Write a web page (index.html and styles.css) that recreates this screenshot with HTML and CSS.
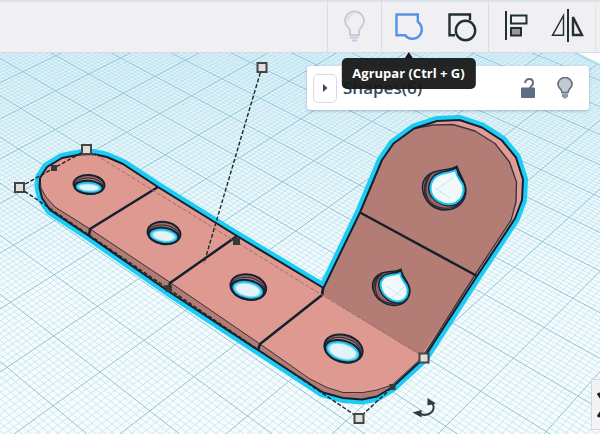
FILE: index.html
```html
<!DOCTYPE html>
<html lang="es">
<head>
<meta charset="utf-8">
<meta name="viewport" content="width=device-width, initial-scale=1">
<title>Editor 3D</title>
<link rel="stylesheet" href="styles.css">
</head>
<body>
<header class="toolbar">
  <div class="group">
    <button class="tool" type="button" aria-label="Mostrar todo" disabled>
      <svg viewBox="0 0 54 52" fill="none" stroke="#c3ccd8" stroke-width="2">
        <path d="M22 35v-4c0-3-5-5-5-10a9.500 9.500 0 0 1 19 0c0 5-5 7-5 10v4z"/>
        <path d="M20 21c0-4 2-6 5-7" stroke-width="1"/>
        <path d="M22 37.500h9M24 40.500h5"/>
      </svg>
    </button>
  </div>
  <div class="group">
    <div class="tool-wrap">
      <button class="tool" type="button" aria-describedby="tip" aria-label="Agrupar">
        <svg viewBox="0 0 54 52" fill="none" stroke="#5594e0" stroke-width="2.400">
          <path d="M14.500 14.500h21.300v7.300a9.300 9.300 0 1 1-12.600 13.400h-8.700z"/>
        </svg>
      </button>
      <div class="tooltip" id="tip" role="tooltip">Agrupar (Ctrl + G)</div>
    </div>
    <button class="tool" type="button" aria-label="Desagrupar">
      <svg viewBox="0 0 54 52" fill="none" stroke="#22302f" stroke-width="2.400">
        <path d="M35 20v-5.500H14.500v20.700H20"/>
        <circle cx="30.500" cy="30.500" r="9.700"/>
      </svg>
    </button>
  </div>
  <div class="group">
    <button class="tool" type="button" aria-label="Alinear">
      <svg viewBox="0 0 54 52" fill="none" stroke="#22302f" stroke-width="2">
        <path d="M17 11v29"/>
        <path d="M22 15.500h15.500v8H22z"/>
        <path d="M22 28h10v7.500H22z" fill="#96999c"/>
      </svg>
    </button>
    <button class="tool" type="button" aria-label="Reflejar">
      <svg viewBox="0 0 54 52" fill="none" stroke="#22302f">
        <path d="M21.500 15.500v19.800H10.500z" stroke-width="1.400"/>
        <path d="M26 9v33" stroke-width="2"/>
        <path d="M31 17v18h9z" stroke-width="2.400"/>
      </svg>
    </button>
  </div>
</header>

<main class="stage">
  <svg class="scene" viewBox="0 53 600 381" preserveAspectRatio="xMinYMin slice" role="img" aria-label="Pieza en L con agujeros">
    <defs>
      <linearGradient id="haze" x1="0" y1="0" x2="0" y2="1">
        <stop offset="0" stop-color="#cfe9f2" stop-opacity="0.6"/>
        <stop offset="0.600" stop-color="#cfe9f2" stop-opacity="0"/>
      </linearGradient>
    </defs>
    <rect y="53" width="600" height="381" fill="url(#haze)"/>
    <path id="plane-fine" class="fine"/>
    <path id="plane-bold" class="bold"/>
    <path d="M569 50L600 65V50z" fill="#fafcfd"/>
    <path d="M569 50L600 65" stroke="#a9dcea" stroke-width="2"/>

    <g stroke-linejoin="round">
      <path fill="#15202f" stroke="#1cccf4" stroke-width="10" d="M40 178L47 167L62 158L80 154.500L93 154L107 157L123 164L158 187L237 236L323.500 288L360 212.500L382 160L393.500 143.500L414 128.500L437 121L459.500 120L482 127.500L502 140.500L516 157.500L523 179.500L522 200L515 218.500L477 276L424 358L392.500 387L377 396.500L362 399.500L343 398L323 392.500L310 384L258 350L168 291L89 236L50 210L42 198L39.500 187z"/>
      <path class="side" d="M40 178L47 198L55 207L90 229L168 281L260 344L310 379L327 387L343 392.500L363 392.500L377 390L392 385L392.500 387L377 396.500L362 399.500L343 398L323 392.500L310 384L258 350L168 291L89 236L50 210L42 198L39.500 187z"/>
      <path class="top" d="M40 178L47 167L62 158L80 154.500L93 154L107 157L123 164L158 187L237 236L323.500 288L424 356L392 385L377 390L363 392.500L343 392.500L327 387.500L310 379L260 344L168 281L90 229L55 207L46 197L41 188z"/>
      <path class="outline" d="M40 178L47 167L62 158L80 154.500L93 154L107 157L123 164L158 187L237 236L323.500 288M424 358L392.500 387L377 396.500L362 399.500L343 398L323 392.500L310 384L258 350L168 291L89 236L50 210L42 198L39.500 187L40 178"/>
      <path class="rim" d="M323.500 288L360 212.500L382 160L393.500 143.500L414 128.500L437 121L459.500 120L482 127.500L502 140.500L516 157.500L523 179.500L522 200L515 218.500L477 276L424 358L322 294z"/>
      <path class="flap" d="M323.500 288L360 212.500L382 160L393.500 143.500L414 128.500L433 125L453 124.500L475 131L495 143.500L509.500 162L516.500 182L516 202L509 221L475 275L421 356L322 295z"/>
      <path d="M414 128.500L433 125L453 124.500L475 131L495 143.500L509.500 162L516.500 182L516 202L511 220L475 275L424 355" fill="none" stroke="#3a343e" stroke-width="1.400"/>
      <path class="outline" d="M322 295L323.500 288L360 212.500L382 160L393.500 143.500L414 128.500L437 121L459.500 120L482 127.500L502 140.500L516 157.500L523 179.500L522 200L515 218.500L477 276L424 358"/>
    </g>

    <g class="seam">
      <path d="M158 187L90 229L89 236M237 236L170 283L168 290M323 288L322 295L260 344L258 350"/>
      <path d="M360 212.500L477 276"/>
    </g>

    <g id="holes"></g>

    <g stroke-linejoin="round">
      <path d="M457 166C452 170 443 169 434 172C426 175 422 181 422.500 189C424 202 434 210 445 210C459 210 466 200 466 190C465 180 459 174 457 166z" fill="#94655f" stroke="#17202e" stroke-width="1.400"/>
      <path d="M433 172C424 181 424 195 430 202C437 210 451 210 460 204M431 173C422 183 423 196 429 203" fill="none" stroke="#2c2b36" stroke-width="1.200"/>
      <path class="opening-edge" d="M456 168C450 173 441 171 435 176C429 182 428 190 432 196C437 203 448 207 456 204C463 200 466 192 464 185C462 179 457 176 456 168z"/>
      <path class="opening" d="M455.500 170C450 173.500 441 172 435.500 177C430 182 429 190 432.500 195.500C437 203 448 206 455.500 203C462 199.500 465 192 463 185.500C461 180 456.500 178 455.500 170z"/>
      <path d="M437 189L454 177M435 188L450 198" stroke="#c4e7f1" stroke-width="1"/>
      <path d="M401 269C396 272 388 271 382 273C375 276 372 281 372.500 287C374 298 384 305 394 305.500C404 305 410 299 410 290C409 281 402 277 401 269z" fill="#94655f" stroke="#17202e" stroke-width="1.400"/>
      <path d="M382 274C373 281 374 293 380 299C386 304 395 305 401 303M379 275C371 284 373 294 379 300" fill="none" stroke="#2c2b36" stroke-width="1.200"/>
      <path class="opening-edge" d="M400.500 271C396 274 388 273 383 277C378 282 379 288 383 294C388 301 396 304 402 301C409 298 410 291 407 285C405 280 401 278 400.500 271z"/>
      <path class="opening" d="M400 273C395.500 275.500 388 274 383.500 278C379 282.500 380 288 383.500 293.500C388.500 300 396 303 402 300.500C408 297.500 409 291 406.500 285.500C404 281 400.500 279 400 273z"/>
      <path d="M386 286L401 296M392 298L404 287" stroke="#c4e7f1" stroke-width="1"/>
    </g>

    <g fill="none">
      <path class="hidden-edge" d="M91 152L322 295L422 355"/>
      <path class="guide" d="M86.500 150L19 187.500L359 418L424 358M262 67L204 263"/>
    </g>
    <g class="handle">
      <path d="M257.500 63h9v9h-9zM82 145h9v9h-9zM15 183h9v9h-9zM419.500 353.500h9v9h-9zM354.500 414h9v9h-9z"/>
    </g>
    <path d="M51 165h6v6h-6zM233 238h7v7h-7zM166 285h6v7h-6zM389.500 384h6v6h-6z" fill="#38383a"/>
    <g fill="#34393b">
      <path d="M412.500 412.500L421.500 410V417.500z"/>
      <path d="M427.500 398L436 403.500L427.500 405.500z"/>
      <path d="M420 414C429 417 437 411 432 402.500" fill="none" stroke="#34393b" stroke-width="2"/>
    </g>
  </svg>

  <section class="panel">
    <button class="expand" type="button" aria-label="Expandir">
      <svg viewBox="0 0 6 10"><path d="M1 1l4.500 4L1 9z" fill="#34495e"/></svg>
    </button>
    <h1 class="title">Shapes(6)</h1>
    <button class="icon" type="button" aria-label="Bloquear">
      <svg viewBox="0 0 16 22">
        <path d="M5 6C6 .5 13 .5 13 6c0 3-3 3-3 6" fill="none" stroke="#5d6d82" stroke-width="2"/>
        <rect x="1" y="10.500" width="14" height="10.500" rx="1" fill="#5d6d82"/>
      </svg>
    </button>
    <button class="icon" type="button" aria-label="Ocultar">
      <svg viewBox="0 0 16 22">
        <path d="M5 15.500c0-4-4-4-4-8a7 7 0 0 1 14 0c0 4-4 4-4 8z" fill="#c3c8d1" stroke="#5d6d82" stroke-width="1.600"/>
        <path d="M5 16.500h6v3L9 21.500H7L5 19.500z" fill="#8e99a9"/>
      </svg>
    </button>
  </section>

  <button class="drawer" type="button" aria-label="Ocultar panel">
    <svg viewBox="0 0 14 26"><path d="M1 1l8 12-8 12" fill="none" stroke="#1b1d1f" stroke-width="3"/></svg>
  </button>
</main>
<script src="scene.js"></script>
</body>
</html>
```
FILE: styles.css
```css
* {
  box-sizing: border-box;
}

body {
  margin: 0;
  min-height: 100vh;
  display: flex;
  flex-direction: column;
  overflow: hidden;
  font-family: "Open Sans", "Noto Sans", sans-serif;
}

button {
  padding: 0;
  border: 0;
  background: none;
  display: flex;
  align-items: center;
  justify-content: center;
}

.toolbar {
  position: relative;
  z-index: 2;
  display: flex;
  justify-content: flex-end;
  padding-right: 4px;
  background: linear-gradient(#d5dce8, #f0f0f3 3px);
  border-bottom: 1px solid #d9dbe4;
}

.group {
  display: flex;
  border-left: 1px solid #d9dce3;
}

.group:last-child {
  border-right: 1px solid #e2e4ea;
}

.tool {
  width: 53px;
  height: 52px;
}

.tool svg {
  width: 54px;
  height: 52px;
  flex: none;
}

.tool-wrap {
  position: relative;
}

.tooltip {
  position: absolute;
  top: 58px;
  left: 50%;
  transform: translateX(-50%);
  padding: 0 11px;
  border-radius: 5px;
  background: rgba(24, 24, 24, 0.95);
  color: #fff;
  font-size: 13px;
  font-weight: 700;
  line-height: 31px;
  white-space: nowrap;
}

.tooltip::before {
  content: "";
  position: absolute;
  bottom: 100%;
  left: 50%;
  margin-left: -4px;
  border: 4px solid transparent;
  border-top: 0;
  border-bottom: 6px solid #1a1a1a;
}

.stage {
  position: relative;
  flex: 1;
  background: #f7fbfc;
  overflow: hidden;
}

.scene {
  display: block;
  width: 100%;
}

.fine {
  fill: none;
  stroke: #aadff0;
  stroke-width: 1;
  opacity: 0.6;
}

.bold {
  fill: none;
  stroke: #8ac6dc;
  stroke-width: 1;
}

.top {
  fill: #de9991;
  stroke: #43323a;
  stroke-width: 1;
}

.side {
  fill: #b07c74;
}

.rim {
  fill: #e19d95;
}

.flap {
  fill: #b37d75;
}

.outline {
  fill: none;
  stroke: #15202f;
  stroke-width: 2;
}

.seam {
  fill: none;
  stroke: #15202f;
  stroke-width: 2.5;
}

.opening-edge {
  fill: #17202e;
  stroke: #17202e;
  stroke-width: 3;
}

.opening {
  fill: #f1f9fb;
  stroke: #1cc6ee;
  stroke-width: 2;
}

.hidden-edge {
  stroke: #a26f6c;
  stroke-width: 1;
  stroke-dasharray: 4 2;
}

.guide {
  stroke: #222427;
  stroke-width: 1.4;
  stroke-dasharray: 4 2;
}

.handle {
  fill: #dededd;
  stroke: #454545;
  stroke-width: 2;
}

.panel {
  position: absolute;
  top: 13px;
  right: 11px;
  width: 47%;
  height: 44px;
  padding: 0 16px 0 6px;
  display: flex;
  align-items: center;
  background: #fff;
  border-radius: 3px;
  box-shadow: 0 1px 3px rgba(60, 80, 110, 0.35);
}

.expand {
  width: 24px;
  height: 29px;
  border: 1px solid #d9dbe6;
  border-radius: 5px;
}

.expand svg {
  width: 6px;
  height: 10px;
}

.title {
  flex: 1;
  margin: 0 0 0 6px;
  color: #34495e;
  font-size: 17px;
  font-weight: 600;
  line-height: 24px;
}

.icon {
  width: 16px;
  margin-left: 21px;
}

.icon svg {
  width: 16px;
  height: 22px;
}

.drawer {
  position: absolute;
  right: 0;
  bottom: 4px;
  width: 9px;
  height: 51px;
  border: 1px solid #d5d9e0;
  border-right: 0;
  background: #f2f3f6;
  overflow: hidden;
  justify-content: flex-start;
  padding-left: 5px;
}

.drawer svg {
  width: 14px;
  height: 26px;
  flex: none;
}
```
FILE: scene.js
```js
// Workplane grid in perspective: two vanishing points and one origin.
const origin = [100, 372];
const vanishA = [-1212, -650];
const vanishB = [1518, -650];
const stepA = -0.0366;
const stepB = 0.032;

function project(i, j) {
  const s = i * stepA;
  const t = j * stepB;
  const w = 1 + s + t;
  return [0, 1].map(k => ((origin[k] + s * vanishA[k] + t * vanishB[k]) / w).toFixed(2));
}

function grid(skip) {
  const parts = [];
  for (let n = -120; n <= 200; n++) {
    if (skip ? n % 10 === 0 : n % 10 !== 0) continue;
    const k = n / 10;
    if (k >= -12 && k <= 12) parts.push(`M${project(k, -7)}L${project(k, 14.7)}`);
    if (k >= -7 && k <= 14.7) parts.push(`M${project(-12, k)}L${project(12, k)}`);
  }
  return parts.join("");
}

document.getElementById("plane-fine").setAttribute("d", grid(true));
document.getElementById("plane-bold").setAttribute("d", grid(false));

// Round holes through the flat arm: centre, radii, tilt.
const holes = [
  [89, 184.5, 15.5, 9.5, 4],
  [164, 233, 16.5, 11, 8],
  [248.300, 287, 18, 12.5, 12],
  [343.500, 348.500, 19.500, 13.500, 16]
];

document.getElementById("holes").innerHTML = holes.map(([x, y, rx, ry, a]) => `
  <g transform="translate(${x} ${y}) rotate(${a})">
    <ellipse rx="${rx}" ry="${ry}" fill="#9c6c68" stroke="#17202e" stroke-width="2"/>
    <ellipse cy="1.3" rx="${rx - 1}" ry="${ry - 1.8}" fill="#b07c74" stroke="#2c2b36"/>
    <ellipse cy="2.8" rx="${rx - 1.5}" ry="${ry - 3}" fill="#1cbde8" stroke="#17202e" stroke-width="2"/>
    <ellipse cy="3" rx="${rx - 4}" ry="${ry - 5.500}" fill="#7fd9f0"/>
    <ellipse cy="3" rx="${rx - 6}" ry="${ry - 6.500}" fill="#e3f3f8"/>
  </g>`).join("");
```
